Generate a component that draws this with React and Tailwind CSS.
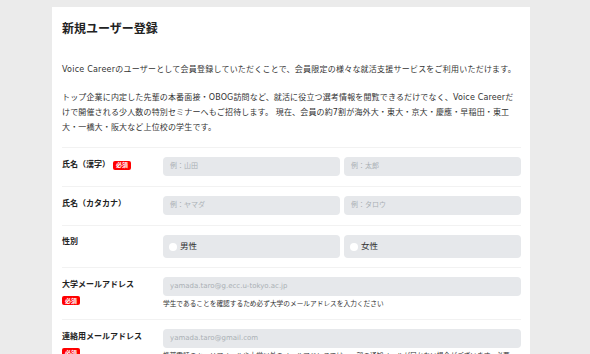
import React from "react";

const font = "font-['DejaVu_Sans','Noto_Sans_CJK_JP',sans-serif]";

const Badge = ({ className = "" }) => (
  <span
    className={`flex h-[9px] w-fit items-center rounded-[2px] bg-[#f00] px-[3px] text-[6px] font-bold leading-none text-white ${className}`}
  >
    必須
  </span>
);

const Input = ({ placeholder }) => (
  <div className="flex h-[19px] flex-1 items-center rounded-[4px] bg-[#e6e8eb] pl-[7px] text-[7px] text-[#aab0b5]">
    {placeholder}
  </div>
);

const Radio = ({ label }) => (
  <div className="flex h-[23px] flex-1 items-center gap-[3px] rounded-[4px] bg-[#e6e8eb] pl-[6px] text-[8.5px] text-[#333]">
    <span className="h-[8px] w-[8px] rounded-full bg-white" />
    {label}
  </div>
);

const Row = ({ label, badge, badgeBelow, children }) => (
  <div className="flex border-t border-[#f2f2f2] pb-[10px] pt-[9px]">
    <div className="w-[101px] shrink-0 pt-[1px] leading-none">
      <div className="flex items-center text-[8px] font-bold leading-[14px] text-[#222]">
        {label}
        {badge && !badgeBelow && <Badge className="ml-[3px]" />}
      </div>
      {badge && badgeBelow && <Badge className="mt-[4px]" />}
    </div>
    <div className="flex-1">{children}</div>
  </div>
);

export default function App() {
  return (
    <div className={`min-h-screen bg-[#ebebeb] pl-[52px] pt-[7px] ${font}`}>
      <div className="w-[478px] bg-white pl-[10px] pr-[9px]">
        <h1 className="pt-[14px] text-[12px] font-bold leading-[16px] text-[#222]">
          新規ユーザー登録
        </h1>

        <p className="mt-[25px] whitespace-nowrap text-[8px] leading-[15px] tracking-[0.22px] text-[#333]">
          Voice Careerのユーザーとして会員登録していただくことで、会員限定の様々な就活支援サービスをご利用いただけます。
        </p>
        <p className="mb-[12px] mt-[13px] whitespace-nowrap text-[8px] leading-[15px] tracking-[0.15px] text-[#333]">
          トップ企業に内定した先輩の本番面接・OBOG訪問など、就活に役立つ選考情報を閲覧できるだけでなく、Voice Careerだ
          <br />
          けで開催される少人数の特別セミナーへもご招待します。 現在、会員の約7割が海外大・東大・京大・慶應・早稲田・東工
          <br />
          大・一橋大・阪大など上位校の学生です。
        </p>

        <Row label="氏名（漢字）" badge>
          <div className="flex gap-[4px]">
            <Input placeholder="例：山田" />
            <Input placeholder="例：太郎" />
          </div>
        </Row>

        <Row label="氏名（カタカナ）">
          <div className="flex gap-[4px]">
            <Input placeholder="例：ヤマダ" />
            <Input placeholder="例：タロウ" />
          </div>
        </Row>

        <div className="flex border-t border-[#f2f2f2] pb-[9px] pt-[9px]">
          <div className="w-[101px] shrink-0 text-[8px] font-bold leading-[14px] text-[#222]">
            性別
          </div>
          <div className="flex flex-1 gap-[4px]">
            <Radio label="男性" />
            <Radio label="女性" />
          </div>
        </div>

        <Row label="大学メールアドレス" badge badgeBelow>
          <Input placeholder="yamada.taro@g.ecc.u-tokyo.ac.jp" />
          <p className="mt-[3px] text-[6.7px] leading-[10px] text-[#333]">
            学生であることを確認するため必ず大学のメールアドレスを入力ください
          </p>
        </Row>

        <Row label="連絡用メールアドレス" badge badgeBelow>
          <Input placeholder="yamada.taro@gmail.com" />
          <p className="mt-[3px] whitespace-nowrap text-[6.7px] leading-[10px] text-[#333]">
            携帯電話のキャリアメールや大学以外のメールアドレスでは、一部の通知メールが届かない場合がございます。必要
          </p>
        </Row>
      </div>
    </div>
  );
}
